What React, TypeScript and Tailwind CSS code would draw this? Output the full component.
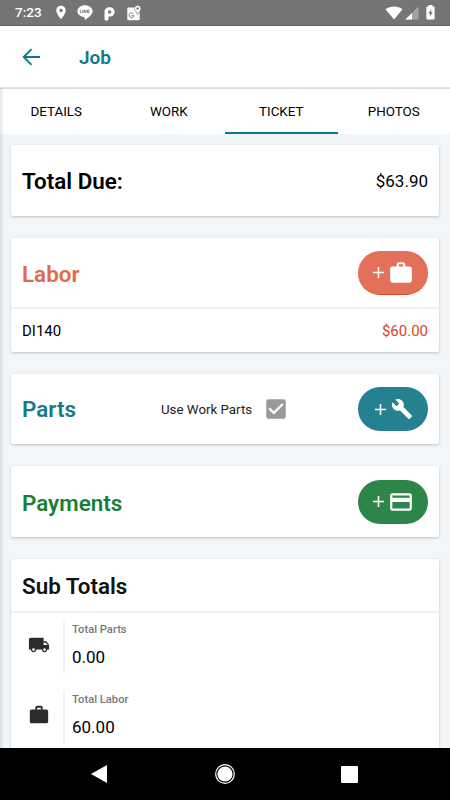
import type { ReactNode } from 'react';
import {
  MdAdd,
  MdCheckBox,
  MdLocalShipping,
  MdLocationOn,
  MdBuild,
  MdPayment,
  MdWork,
} from 'react-icons/md';

const tabs = ['DETAILS', 'WORK', 'TICKET', 'PHOTOS'];

const subTotals = [
  { label: 'Total Parts', value: '0.00', icon: MdLocalShipping },
  { label: 'Total Labor', value: '60.00', icon: MdWork },
];

function StatusBar() {
  return (
    <div className="flex h-[26px] shrink-0 items-center border-b border-[#666] bg-[#757575] pr-[15px] pl-[15px] text-white">
      <span className="w-[38px] pt-[1px] text-[13.5px] leading-none font-medium">7:23</span>
      <MdLocationOn className="h-[17px] w-4" />
      <svg className="ml-2 h-[15px] w-4" viewBox="0 0 16 15">
        <path fill="white" d="M8 .3c4.2 0 7.6 2.7 7.6 6 0 3-3.6 6-7.4 8.4-.5.3-.6-.1-.4-1.5v-1C3.7 12 .4 9.5.4 6.3c0-3.3 3.4-6 7.6-6Z" />
        <path fill="none" stroke="#757575" strokeWidth=".9" d="M3.3 4.8v2.900h1.300M5.800 4.800v3.100M7.200 7.900V5l1.800 2.700V4.800M12.400 5h-1.800v2.700h1.800M10.600 6.400h1.600" />
      </svg>
      <svg className="mt-[2px] ml-[11px] h-[14px] w-[11px]" viewBox="0 0 11 14">
        <path fill="white" d="M.5 4.900C.5 2.200 2.700.3 5.500.3c3 0 5.100 1.900 5.100 4.700 0 2.700-2 4.600-4.700 4.600H4.500v2.200c0 1.200-.8 1.900-2 1.900s-2-.8-2-2Z" />
        <circle cx="5.600" cy="5" r="1.700" fill="#757575" />
      </svg>
      <svg className="ml-3 h-4 w-[15px]" viewBox="0 0 15 16">
        <path fill="white" d="M1.500 2.500h6.200c-.3 3 1.600 5 2.700 7.200.9-1.200 1.700-2.400 2.300-3.500V14c0 .7-.5 1.200-1.200 1.200h-10C.8 15.200.3 14.700.3 14V3.700c0-.7.5-1.200 1.200-1.200Z" />
        <path fill="white" d="M10.600.4c1.900 0 3.300 1.400 3.300 3.200 0 2-1.900 3.300-3.200 5.600C9.600 6.900 7.400 5.600 7.400 3.600 7.400 1.800 8.800.4 10.600.4Z" stroke="#757575" strokeWidth=".5" />
        <circle cx="10.600" cy="3.500" r="1.200" fill="#757575" />
        <path fill="none" stroke="#757575" strokeWidth="1" d="M6.300 8.700a2.300 2.300 0 1 0 .5 2H4.700" />
      </svg>
      <div className="ml-auto flex items-center">
        <svg className="h-[14px] w-[18px]" viewBox="0 0 18 14">
          <path fill="white" d="M.5 3.300C5.500-.3 12.500-.3 17.500 3.300L9 13.500Z" />
        </svg>
        <svg className="mt-[1px] ml-[2px] h-[14px] w-[14px]" viewBox="0 0 14 14">
          <path fill="#a3a3a3" d="M13.500.5v13H.3Z" />
          <path fill="white" d="M7 6.900v6.600H.3Z" />
        </svg>
        <svg className="ml-[7px] h-[15px] w-[9px]" viewBox="0 0 9 15">
          <path fill="white" d="M2.500 0h4v1.500h1.200c.5 0 .9.400.9.900v11.200c0 .5-.4.900-.9.900H1.300a.9.900 0 0 1-.9-.9V2.400c0-.5.400-.9.900-.9h1.200Z" />
          <path fill="#757575" d="M5.500 3.800 2.300 8.500h1.900l-.6 3.500 3.200-4.800H4.900Z" />
        </svg>
      </div>
    </div>
  );
}

function Card({ children, className = '' }: { children: ReactNode; className?: string }) {
  return (
    <section className={`shrink-0 rounded-[2px] bg-white shadow-[0_1px_3px_rgba(0,0,0,0.22)] ${className}`}>
      {children}
    </section>
  );
}

function AddButton({ children, className }: { children: ReactNode; className: string }) {
  return (
    <button className={`flex h-[44px] w-[70px] shrink-0 items-center justify-center rounded-full pr-[3px] text-white ${className}`}>
      <MdAdd className="h-[19px] w-[19px]" />
      {children}
    </button>
  );
}

export default function App() {
  return (
    <div className="flex h-[800px] w-[450px] flex-col overflow-hidden bg-white font-[Roboto,sans-serif] text-black">
      <StatusBar />

      <div className="relative flex min-h-0 flex-1 flex-col">
        <header className="flex h-[63px] shrink-0 items-center border-b-2 border-[#e2e2e2] pt-[1px] pl-[22px] text-[#0b7a89]">
          <svg className="h-[18px] w-[19px]" viewBox="0 0 19 18" fill="none" stroke="currentColor" strokeWidth="1.900">
            <path d="M18 9H2M9.500 1.200 1.700 9l7.800 7.800" />
          </svg>
          <h1 className="ml-[38px] pt-[1px] text-[19px] leading-6 font-semibold">Job</h1>
        </header>

        <nav className="grid h-[45px] shrink-0 grid-cols-4 shadow-[0_1px_2px_rgba(0,0,0,0.25)]">
          {tabs.map((tab) => (
            <button
              key={tab}
              className={`border-b-2 pt-[4px] text-[13.4px] ${tab === 'TICKET' ? 'border-[#0b7a89]' : 'border-transparent'}`}
            >
              {tab}
            </button>
          ))}
        </nav>

        <main className="flex min-h-0 flex-1 flex-col gap-[22px] overflow-hidden bg-[#f2f6f9] px-[11px] pt-[11px]">
          <Card className="flex h-[71px] items-center justify-between px-[11px]">
            <h2 className="pt-[3px] text-[22.4px] font-semibold">Total Due:</h2>
            <span className="pt-[2px] text-[17px]">$63.90</span>
          </Card>

          <Card className="h-[114px]">
            <div className="flex h-[71px] items-center justify-between border-b-2 border-[#f0f0f0] px-[11px]">
              <h2 className="pt-[4px] text-[22.4px] font-semibold text-[#e2684b]">Labor</h2>
              <AddButton className="border-b border-[#e04a1b] bg-[#e37059]">
                <MdWork className="mt-[2px] h-[26px] w-[26px]" />
              </AddButton>
            </div>
            <div className="flex h-[43px] items-center justify-between px-[11px] pt-[2px] text-[15px]">
              <span>DI140</span>
              <span className="text-[#dc431f]">$60.00</span>
            </div>
          </Card>

          <Card className="flex h-[70px] items-center px-[11px]">
            <h2 className="w-[139px] pt-[2px] text-[22.4px] font-semibold text-[#177b8b]">Parts</h2>
            <label className="flex flex-1 items-center text-[13.3px] text-[#222]">
              <span className="w-[102px] pt-[1px]">Use Work Parts</span>
              <MdCheckBox className="h-[26px] w-[26px] text-[#999]" />
            </label>
            <AddButton className="bg-[#25808f]">
              <MdBuild className="ml-[1px] h-[22px] w-[22px]" />
            </AddButton>
          </Card>

          <Card className="flex h-[71px] items-center justify-between px-[11px]">
            <h2 className="pt-[4px] text-[22.4px] font-semibold text-[#188038]">Payments</h2>
            <AddButton className="bg-[#2d8549]">
              <MdPayment className="h-[26px] w-[26px]" />
            </AddButton>
          </Card>

          <Card className="h-[230px]">
            <h2 className="flex h-[54px] items-center border-b-2 border-[#f0f0f0] px-[11px] pt-[3px] text-[22.4px] font-semibold text-[#111]">
              Sub Totals
            </h2>
            <div className="-mt-[1px]">
              {subTotals.map((row) => (
                <div key={row.label} className="flex h-[70px] items-center">
                  <div className="flex w-[52px] justify-center pr-[1px] pb-1 pl-1">
                    <row.icon className="h-[22px] w-[22px] text-[#2c2c2c]" />
                  </div>
                  <div className="h-[53px] border-l-2 border-[#f3f3f3] pl-[7px]">
                    <div className="pt-[1px] text-[11.2px] leading-4 font-medium text-[#777]">{row.label}</div>
                    <div className="pt-[7px] text-[17px] leading-6">{row.value}</div>
                  </div>
                </div>
              ))}
            </div>
          </Card>
        </main>

        {/* drawer edge shadow */}
        <div className="pointer-events-none absolute top-[62px] bottom-0 left-0 w-1 bg-linear-to-r from-black/10 to-transparent" />
      </div>

      <footer className="flex h-[52px] shrink-0 items-center justify-between bg-black pr-[92px] pl-[91px]">
        <svg className="h-[18px] w-4" viewBox="0 0 16 18">
          <path fill="white" d="M16 0v18L0 9Z" />
        </svg>
        <svg className="ml-[2px] h-5 w-5" viewBox="0 0 20 20">
          <circle cx="10" cy="10" r="9.300" fill="none" stroke="white" strokeWidth="1.200" />
          <circle cx="10" cy="10" r="7.600" fill="white" />
        </svg>
        <span className="h-[17px] w-[17px] rounded-[1px] bg-white" />
      </footer>
    </div>
  );
}
